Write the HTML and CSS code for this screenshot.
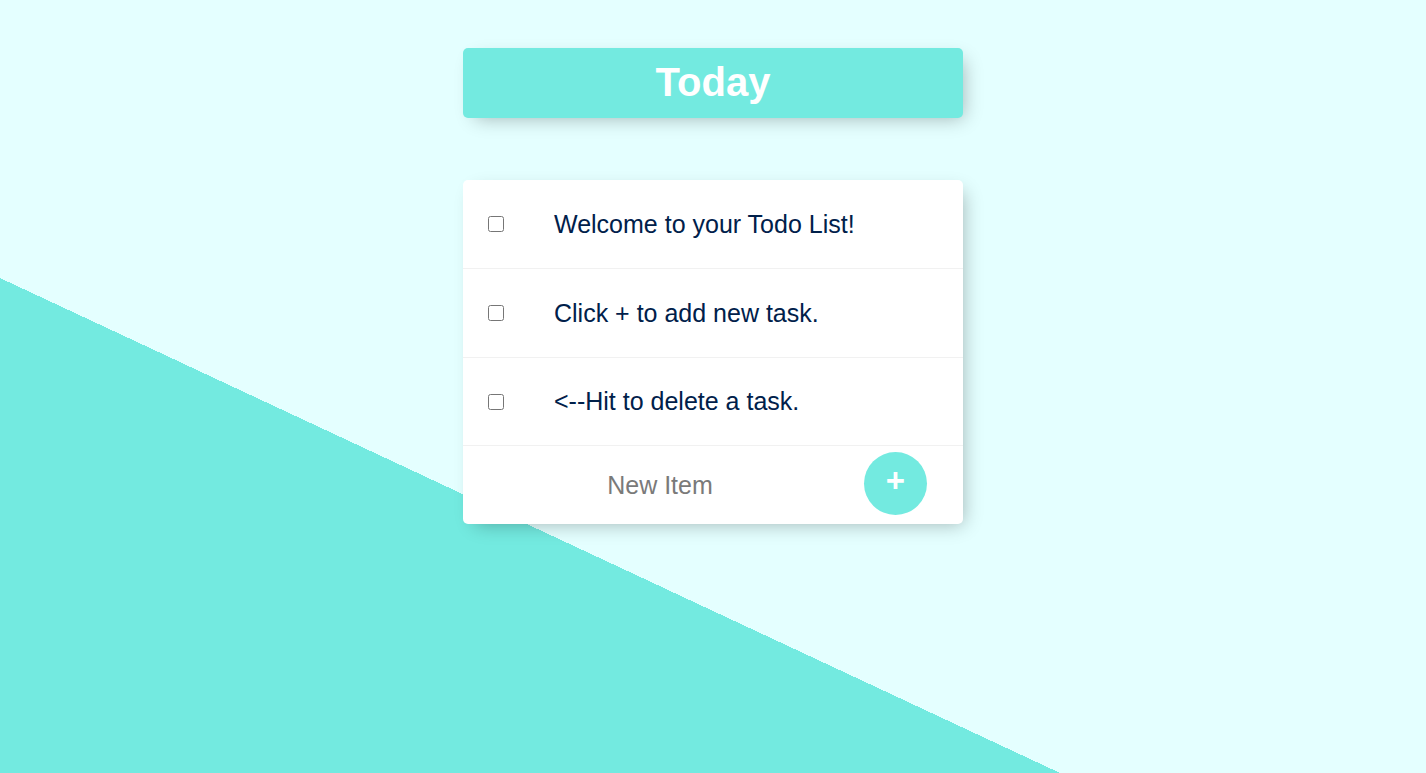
FILE: index.html
```html
<!DOCTYPE html>
<html lang="en">
<head>
<meta charset="utf-8">
<title>Todo List</title>
<link rel="stylesheet" href="styles.css">
</head>
<body>
  <main class="page">
    <div class="heading-box">
      <h1 class="heading">Today</h1>
    </div>
    <div class="card">
      <div class="item">
        <input type="checkbox" class="check">
        <p class="item-text">Welcome to your Todo List!</p>
      </div>
      <div class="item">
        <input type="checkbox" class="check">
        <p class="item-text">Click + to add new task.</p>
      </div>
      <div class="item">
        <input type="checkbox" class="check">
        <p class="item-text">&lt;--Hit to delete a task.</p>
      </div>
      <form class="item add-form">
        <input type="text" class="new-input" placeholder="New Item" autocomplete="off">
        <button type="button" class="add-btn">+</button>
      </form>
    </div>
  </main>
</body>
</html>
```

FILE: styles.css
```css
html {
  height: 100%;
  background: linear-gradient(25.03deg, #73eae0 448.5px, #e4ffff 448.5px);
  background-size: 1426px 773px;
  background-repeat: no-repeat;
  background-color: #e4ffff;
}

body {
  margin: 0;
  height: 100%;
  font-family: "Liberation Sans", Arial, Helvetica, sans-serif;
}

.page {
  display: flex;
  flex-direction: column;
  align-items: center;
  padding-top: 48px;
}

.heading-box {
  width: 500px;
  height: 70px;
  background: #73eae0;
  border-radius: 5px;
  box-shadow: 6px 6px 18px -6px rgba(0, 0, 0, 0.3);
  display: flex;
  align-items: center;
  justify-content: center;
}

.heading {
  margin: 0;
  color: #ffffff;
  font-size: 40px;
  font-weight: 700;
  line-height: 1;
  padding-bottom: 2px;
}

.card {
  margin-top: 62px;
  width: 500px;
  background: #ffffff;
  border-radius: 5px;
  box-shadow: 6px 6px 18px -6px rgba(0, 0, 0, 0.3);
  overflow: hidden;
}

.item {
  height: 88px;
  display: flex;
  align-items: center;
  border-bottom: 1px solid #f1f1f1;
  box-sizing: content-box;
}

.item:nth-child(3) {
  height: 87px;
}

.check {
  width: 16px;
  height: 16px;
  margin: 0 0 0 25px;
  flex: none;
}

.item-text {
  margin: 0 0 0 50px;
  font-size: 25px;
  color: #00204a;
}

.add-form {
  height: 78px;
  border-bottom: none;
}

.new-input {
  width: 376px;
  height: 60px;
  margin-left: 9px;
  padding: 0;
  border: none;
  outline: none;
  text-align: center;
  font-family: "Liberation Sans", Arial, Helvetica, sans-serif;
  font-size: 25px;
  color: #00204a;
  background: transparent;
}

.new-input::placeholder {
  color: #7a7a7a;
}

.add-btn {
  width: 63px;
  height: 63px;
  margin-left: 16px;
  margin-top: -3px;
  border: none;
  border-radius: 50%;
  background: #73eae0;
  color: #ffffff;
  font-family: "Liberation Sans", Arial, Helvetica, sans-serif;
  font-size: 33px;
  font-weight: 700;
  line-height: 1;
  padding: 0 0 6px;
  display: flex;
  align-items: center;
  justify-content: center;
}
```
